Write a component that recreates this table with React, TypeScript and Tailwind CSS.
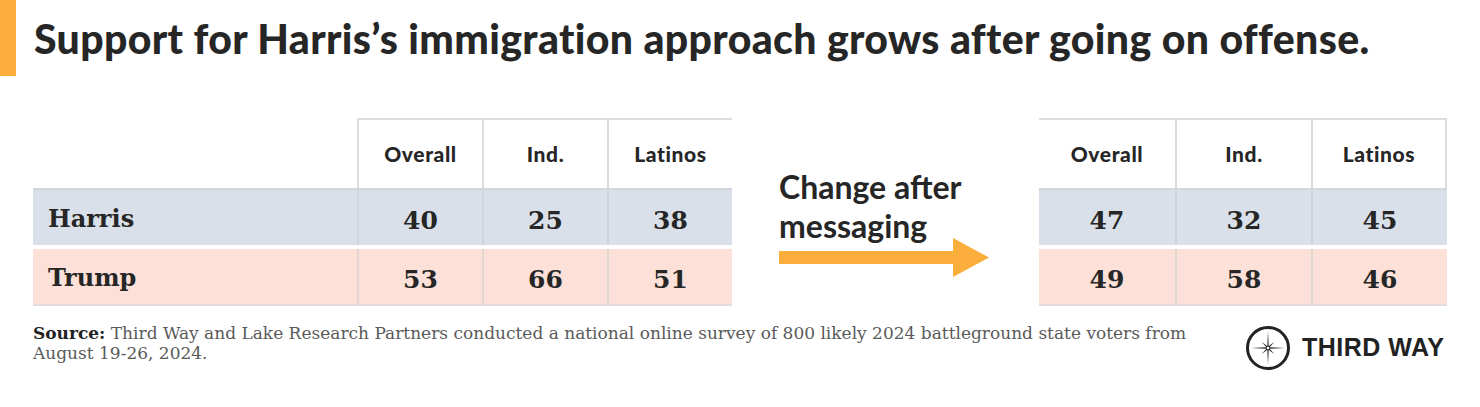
import React from "react";

const sans = { fontFamily: "Lato, 'Open Sans', sans-serif" };
const serif = { fontFamily: "'DejaVu Serif', 'Liberation Serif', serif" };

function starPoints(): string {
  const pts: string[] = [];
  for (let i = 0; i < 16; i++) {
    const ang = (i * Math.PI) / 8 - Math.PI / 2;
    let r: number;
    if (i % 2 === 1) r = 1.8;
    else if ((i / 2) % 2 === 0) r = 17;
    else r = 9;
    pts.push(`${(r * Math.cos(ang)).toFixed(2)},${(r * Math.sin(ang)).toFixed(2)}`);
  }
  return pts.join(" ");
}

function Logo() {
  return (
    <div className="flex items-center gap-[11px]">
      <svg width="46" height="46" viewBox="-23 -23 46 46">
        <circle cx="0" cy="0" r="20.5" fill="none" stroke="#222" strokeWidth="3" />
        <polygon points={starPoints()} fill="#222" />
        <circle cx="0" cy="0" r="1.3" fill="#fff" />
      </svg>
      <span className="text-[25px] font-black tracking-[0.5px] text-[#222]" style={{ fontFamily: "'Liberation Sans', Arial, sans-serif" }}>
        THIRD WAY
      </span>
    </div>
  );
}

const HarrisBg = "bg-[#d9e0e9]";
const TrumpBg = "bg-[#fde1d9]";

export default function App() {
  return (
    <div className="w-[1480px] h-[407px] bg-white relative overflow-hidden text-[#262626]">
      <div className="flex items-start h-[76px]">
        <div className="w-[16px] h-[76px] bg-[#fbae3c]" />
        <h1 className="ml-[18px] mt-[14px] text-[41px] leading-[50px] font-black tracking-[0.35px] whitespace-nowrap" style={sans}>
          Support for Harris’s immigration approach grows after going on offense.
        </h1>
      </div>

      <div className="flex mt-[42px]">
        {/* Left table */}
        <div className="ml-[33px] w-[699px] flex flex-col">
          <div className="flex h-[70px]">
            <div className="w-[324px]" />
            {["Overall", "Ind.", "Latinos"].map((h) => (
              <div
                key={h}
                className="w-[125px] flex items-center justify-center border-t-2 border-l-2 border-[#dcdcdc] text-[21px] tracking-[0.6px] font-black"
                style={sans}
              >
                {h}
              </div>
            ))}
          </div>
          <div className={`flex h-[57px] ${HarrisBg} border-t-2 border-[#d2d6dc]`}>
            <div className="w-[324px] pl-[15px] pt-[11px] text-[24px] font-bold" style={serif}>
              Harris
            </div>
            {["40", "25", "38"].map((v) => (
              <div key={v} className="w-[125px] border-l-2 border-[#cfd4da] flex items-center justify-center pt-[7px] text-[25px] font-bold" style={serif}>
                {v}
              </div>
            ))}
          </div>
          <div className="h-[4px]" />
          <div className={`flex h-[57px] ${TrumpBg} border-b-2 border-[#e3dcda]`}>
            <div className="w-[324px] pl-[15px] pt-[11px] text-[24px] font-bold" style={serif}>
              Trump
            </div>
            {["53", "66", "51"].map((v) => (
              <div key={v} className="w-[125px] border-l-2 border-[#e2d6d2] flex items-center justify-center pt-[7px] text-[25px] font-bold" style={serif}>
                {v}
              </div>
            ))}
          </div>
        </div>

        {/* Middle */}
        <div className="w-[307px] pl-[47px] pt-[49px] flex flex-col">
          <div className="text-[32px] leading-[39px] font-bold" style={sans}>
            Change after
            <br />
            messaging
          </div>
          <svg width="212" height="40" viewBox="0 0 212 40" className="mt-[-7px]">
            <rect x="0" y="13" width="176" height="13" fill="#fbae3c" />
            <polygon points="174,0 210,19.5 174,39" fill="#fbae3c" />
          </svg>
        </div>

        {/* Right table */}
        <div className="w-[408px] flex flex-col">
          <div className="flex h-[70px] border-t-2 border-[#dcdcdc]">
            {["Overall", "Ind.", "Latinos"].map((h, i) => (
              <div
                key={h}
                className={`w-[136px] flex items-center justify-center text-[21px] tracking-[0.6px] font-black ${i > 0 ? "border-l-2 border-[#dcdcdc]" : ""} ${i === 2 ? "border-r-2 border-[#dcdcdc]" : ""}`}
                style={sans}
              >
                {h}
              </div>
            ))}
          </div>
          <div className={`flex h-[57px] ${HarrisBg} border-t-2 border-[#d2d6dc]`}>
            {["47", "32", "45"].map((v, i) => (
              <div key={v} className={`w-[136px] flex items-center justify-center pt-[7px] text-[25px] font-bold ${i > 0 ? "border-l-2 border-[#cfd4da]" : ""}`} style={serif}>
                {v}
              </div>
            ))}
          </div>
          <div className="h-[4px]" />
          <div className={`flex h-[57px] ${TrumpBg} border-b-2 border-[#e3dcda]`}>
            {["49", "58", "46"].map((v, i) => (
              <div key={v} className={`w-[136px] flex items-center justify-center pt-[7px] text-[25px] font-bold ${i > 0 ? "border-l-2 border-[#e2d6d2]" : ""}`} style={serif}>
                {v}
              </div>
            ))}
          </div>
        </div>
      </div>

      {/* Footer */}
      <div className="flex items-start mt-[17px]">
        <div className="ml-[33px] w-[1160px] text-[17px] leading-[20px] text-[#5a5a5a] whitespace-nowrap" style={serif}>
          <div>
            <b className="font-bold text-[#222]">Source:</b> Third Way and Lake Research Partners conducted a national online survey of 800 likely 2024 battleground state voters from
          </div>
          <div>August 19-26, 2024.</div>
        </div>
        <div className="ml-[52px] mt-[2px]">
          <Logo />
        </div>
      </div>
    </div>
  );
}
